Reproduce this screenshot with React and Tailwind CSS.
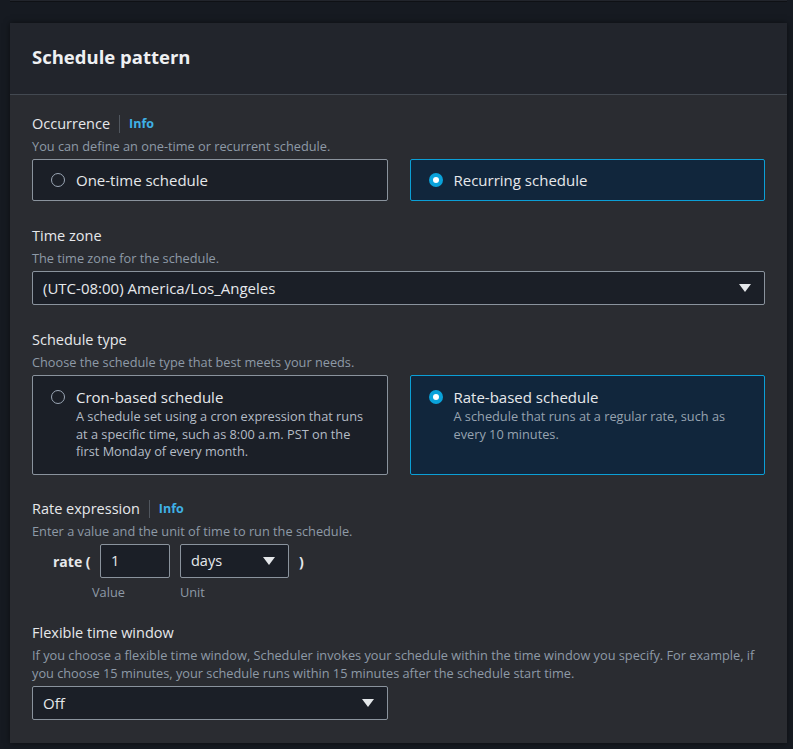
import React from "react";

const Radio = ({ checked }) =>
  checked ? (
    <span className="mt-[3px] flex h-[14px] w-[14px] shrink-0 items-center justify-center rounded-full bg-[#0aa2da]">
      <span className="h-[6px] w-[6px] rounded-full bg-white"></span>
    </span>
  ) : (
    <span className="mt-[3px] h-[14px] w-[14px] shrink-0 rounded-full border-[1.5px] border-[#9ba7b6]"></span>
  );

const Caret = () => (
  <svg width="12" height="8" viewBox="0 0 12 8" className="shrink-0">
    <path d="M0 0h12L6 8z" fill="#e4e7ea" />
  </svg>
);

const Label = ({ children, info }) => (
  <div className="flex items-center text-[14.5px] leading-[20px] font-medium text-[#e6e8eb]">
    <span>{children}</span>
    {info && (
      <>
        <span className="mx-[9px] h-[18px] w-px bg-[#50565e]"></span>
        <span className="text-[12.5px] font-bold text-[#3fb1e6]">Info</span>
      </>
    )}
  </div>
);

const Desc = ({ children }) => (
  <p className="mt-[3px] text-[12.75px] leading-[18px] text-[#8e9aa7]">{children}</p>
);

const Card = ({ checked, title, children, className = "" }) => (
  <div
    className={
      "flex gap-[11px] rounded-[2px] border px-[18px] " +
      (checked ? "border-[#0b9fd6] bg-[#11263c] " : "border-[#8a939d] bg-[#1b1f27] ") +
      className
    }
  >
    <Radio checked={checked} />
    <div>
      <div className="text-[15px] leading-[20px] text-[#e6e8eb]">{title}</div>
      {children && (
        <p
          className={
            "mt-[1px] text-[12.75px] leading-[17.5px] " +
            (checked ? "text-[#97a3b0]" : "text-[#b4bcc6]")
          }
        >
          {children}
        </p>
      )}
    </div>
  </div>
);

const Select = ({ value, className = "" }) => (
  <div
    className={
      "flex h-[34px] items-center justify-between rounded-[2px] border border-[#8a939d] bg-[#1b1f27] pl-[10px] pr-[13px] text-[#e6e8eb] " +
      className
    }
  >
    <span>{value}</span>
    <Caret />
  </div>
);

export default function App() {
  return (
    <div
      className="min-h-[749px] bg-[#161a21] px-[10px] pr-[6px]"
      style={{ fontFamily: "'Open Sans', 'Noto Sans', sans-serif" }}
    >
      <div className="h-[2px] border-b border-[#0f1115] bg-[#22252c]"></div>
      <div className="mt-[21px] overflow-hidden shadow-[0_0_6px_rgba(0,0,0,0.5)]">
        <div className="flex h-[72px] items-center border-b border-[#434951] bg-[#22252c] px-[22px] pb-[3px]">
          <h2 className="text-[18.5px] font-bold text-[#eef0f2]">Schedule pattern</h2>
        </div>
        <div className="bg-[#2a2c31] px-[22px] pt-[19px] pb-[23px]">
          {/* Occurrence */}
          <Label info>Occurrence</Label>
          <Desc>You can define an one-time or recurrent schedule.</Desc>
          <div className="mt-[4px] grid grid-cols-2 gap-[22px]">
            <Card title="One-time schedule" className="items-start py-[10px]" />
            <Card checked title="Recurring schedule" className="items-start py-[10px]" />
          </div>

          {/* Time zone */}
          <div className="mt-[25px]">
            <Label>Time zone</Label>
            <Desc>The time zone for the schedule.</Desc>
            <Select value="(UTC-08:00) America/Los_Angeles" className="mt-[4px] text-[15px]" />
          </div>

          {/* Schedule type */}
          <div className="mt-[25px]">
            <Label>Schedule type</Label>
            <Desc>Choose the schedule type that best meets your needs.</Desc>
            <div className="mt-[4px] grid grid-cols-2 gap-[22px]">
              <Card title="Cron-based schedule" className="h-[100px] pt-[11px]">
                A schedule set using a cron expression that runs at a specific time, such as 8:00 a.m. PST on the first Monday of every month.
              </Card>
              <Card checked title="Rate-based schedule" className="h-[100px] pt-[11px]">
                A schedule that runs at a regular rate, such as every 10 minutes.
              </Card>
            </div>
          </div>

          {/* Rate expression */}
          <div className="mt-[24px]">
            <Label info>Rate expression</Label>
            <Desc>Enter a value and the unit of time to run the schedule.</Desc>
            <div className="mt-[4px] flex items-center pl-[21px]">
              <span className="w-[47px] text-[14px] font-bold text-[#e6e8eb]">rate (</span>
              <div className="flex h-[34px] w-[70px] items-center rounded-[2px] border border-[#8a939d] bg-[#1b1f27] px-[10px] text-[14.5px] text-[#e6e8eb]">
                1
              </div>
              <Select value="days" className="ml-[10px] w-[109px] text-[14.5px]" />
              <span className="ml-[10px] text-[14px] font-bold text-[#e6e8eb]">)</span>
            </div>
            <div className="mt-[6px] flex pl-[60px] text-[12.75px] leading-[16px] text-[#8e9aa7]">
              <span className="w-[88px]">Value</span>
              <span>Unit</span>
            </div>
          </div>

          {/* Flexible time window */}
          <div className="mt-[23px]">
            <Label>Flexible time window</Label>
            <Desc>
              If you choose a flexible time window, Scheduler invokes your schedule within the time window you specify. For example, if you choose 15 minutes, your schedule runs within 15 minutes after the schedule start time.
            </Desc>
            <Select value="Off" className="mt-[4px] w-[356px] text-[15px]" />
          </div>
        </div>
      </div>
    </div>
  );
}
